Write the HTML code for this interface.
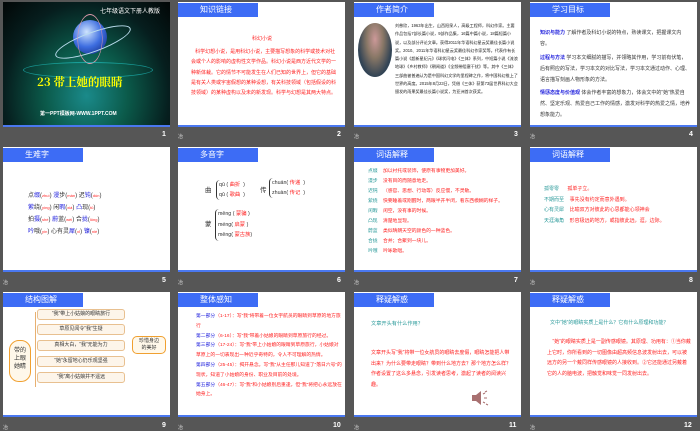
<!DOCTYPE html>
<html><head><meta charset="utf-8"><style>
*{margin:0;padding:0;box-sizing:border-box}
body{width:700px;height:431px;background:#565656;position:relative;overflow:hidden;font-family:"Liberation Sans","Noto Sans CJK SC",sans-serif}
.s{position:absolute;width:167px;height:125px;background:#fff;overflow:hidden}
.s:after{content:"";position:absolute;left:0;right:0;bottom:0;height:2px;background:#4a78f0}
.h{position:absolute;left:0;top:1px;width:80px;height:14px;background:#3d6cf5;color:#fff;font-size:8px;line-height:14px;padding-left:22px}
.n{position:absolute;color:#fff;font-size:7px;font-weight:bold}
.i{position:absolute;color:#ddd;font-size:5px}
.t{position:absolute;font-size:5px;line-height:9.5px}
.r{color:#f22}.b{color:#22d}.g{color:#2a9a9a}
</style></head><body>

<!-- slide 1 -->
<div class="s" style="left:3px;top:2px;background:radial-gradient(ellipse at 50% 75%,#1a8a8a 0%,#0b5a4a 35%,#061e1e 70%,#020606 100%)">
<div style="position:absolute;left:70px;top:18px;width:34px;height:34px;border-radius:50%;background:radial-gradient(circle at 40% 35%,#cfe4ff,#3d6de0 50%,#0a1e70)"></div>
<div style="position:absolute;left:50px;top:30px;width:80px;height:20px;border:1px solid #bde;border-radius:50%;transform:rotate(-20deg)"></div>
<div style="position:absolute;left:62px;top:12px;width:50px;height:50px;border:1px solid #d9a;border-radius:50%;transform:scaleX(.5) rotate(30deg)"></div>
<div style="position:absolute;left:20px;top:60px;width:130px;height:16px;border:1px solid #2cc;border-radius:50%;opacity:.6"></div>
<div style="position:absolute;left:97px;top:4px;color:#fff;font-size:6px">七年级语文下册人教版</div>
<div style="position:absolute;left:34px;top:72px;color:#ff0;font-size:11.5px;font-weight:bold;font-family:'Noto Serif CJK SC',serif">23 带上她的眼睛</div>
<div style="position:absolute;left:37px;top:108px;color:#fff;font-size:5px;font-weight:bold">第一PPT模板网-WWW.1PPT.COM</div>
</div>
<div class="n" style="left:162px;top:131px">1</div>

<!-- slide 2 -->
<div class="s" style="left:178px;top:2px"><div class="h">知识链接</div>
<div class="t r" style="left:74px;top:33px">科幻小说</div>
<div class="t r" style="left:13px;top:45px;width:147px;line-height:10.3px">&nbsp;&nbsp;&nbsp;科学幻想小说，是用科幻小说，主要描写想象的科学或技术对社会或个人的影响的虚构性文学作品。科幻小说是西方近代文学的一种新体裁。它的情节不可能发生在人们已知的世界上，但它的基础是有关人类或宇宙假想的某种设想，有关科技领域（包括假设的科技领域）的某种虚构以及未的新发现。科学与幻想是其两大特点。</div>
</div>
<div class="i" style="left:178px;top:133px">冶</div><div class="n" style="left:337px;top:131px">2</div>

<!-- slide 3 -->
<div class="s" style="left:354px;top:2px"><div class="h">作者简介</div>
<div style="position:absolute;left:4px;top:21px;width:34px;height:54px;border-radius:50%;background:radial-gradient(ellipse at 50% 30%,#c99 0%,#876 35%,#345 70%,#2a4a5a)"></div>
<div class="t" style="left:41px;top:20px;width:123px;font-size:4.1px;line-height:8.3px;color:#222">刘慈欣，1963年出生，山西阳泉人，高级工程师，科幻作家。主要作品包括7部长篇小说，9部作品集，16篇中篇小说，18篇短篇小说，以及部分评论文章。获得2011年华语科幻星云奖最佳长篇小说奖。2010、2011年华语科幻星云奖最佳科幻作家奖等。代表作有长篇小说《超新星纪元》《球状闪电》《三体》系列，中短篇小说《流浪地球》《乡村教师》《朝闻道》《全频带阻塞干扰》等。其中《三体》三部曲被普遍认为是中国科幻文学的里程碑之作，将中国科幻推上了世界的高度。2015年8月23日，凭借《三体》获第73届世界科幻大会颁发的雨果奖最佳长篇小说奖，为亚洲首次获奖。</div>
</div>
<div class="i" style="left:354px;top:133px">冶</div><div class="n" style="left:514px;top:131px">3</div>

<!-- slide 4 -->
<div class="s" style="left:530px;top:2px"><div class="h">学习目标</div>
<div class="t" style="left:10px;top:26px;width:150px;font-size:5px;line-height:11px;color:#333"><b class="b">知识与能力</b> 了解作者及科幻小说的特点，熟读课文，把握课文内容。</div>
<div class="t" style="left:10px;top:51px;width:150px;font-size:5px;line-height:11px;color:#333"><b class="b">过程与方法</b> 学习本文细腻的描写，并领略其作用，学习前有伏笔，后有照应的写法，学习本文的对比写法，学习本文通过动作、心理、语言描写刻画人物形象的方法。</div>
<div class="t" style="left:10px;top:86px;width:150px;font-size:5px;line-height:11px;color:#333"><b class="b">情感态度与价值观</b> 体会作者丰富的想象力，体会文中的“她”热爱自然、坚定乐观、热爱自己工作的情感，激发对科学的热爱之情，培养想象能力。</div>
</div>
<div class="i" style="left:530px;top:133px">冶</div><div class="n" style="left:689px;top:131px">4</div>

<!-- slide 5 -->
<div class="s" style="left:3px;top:147px"><div class="h">生难字</div>
<div class="t" style="left:25px;top:43px;font-size:6px;line-height:12px;color:#333;white-space:nowrap">
点<span class="b">缀</span>(<span class="r" style="font-size:4px">zhuì</span>) <span class="b">漫</span>步(<span class="r" style="font-size:4px">màn</span>) 迟<span class="b">钝</span>(<span class="r" style="font-size:4px">dùn</span>)<br>
<span class="b">萦</span>绕(<span class="r" style="font-size:4px">yíng</span>) 闲<span class="b">暇</span>(<span class="r" style="font-size:4px">xiá</span>) <span class="b">凸</span>现(<span class="r" style="font-size:4px">tū</span>)<br>
拍<span class="b">摄</span>(<span class="r" style="font-size:4px">shè</span>) <span class="b">蔚</span>蓝(<span class="r" style="font-size:4px">wèi</span>) 合<span class="b">拢</span>(<span class="r" style="font-size:4px">lǒng</span>)<br>
<span class="b">吟</span>哦(<span class="r" style="font-size:4px">yín</span>) 心有灵<span class="b">犀</span>(<span class="r" style="font-size:4px">xī</span>) <span class="b">镍</span>(<span class="r" style="font-size:4px">niè</span>)</div>
</div>
<div class="i" style="left:3px;top:279px">冶</div><div class="n" style="left:162px;top:277px">5</div>

<!-- slide 6 -->
<div class="s" style="left:178px;top:147px"><div class="h">多音字</div>
<div class="t" style="left:27px;top:39px;font-size:6.5px;color:#333">曲</div>
<div class="t" style="left:38px;top:33px;font-size:5.3px;line-height:10px;color:#333;border-left:1px solid #333;border-radius:4px 0 0 4px;padding-left:2px">qū ( <span class="r">曲折</span> &nbsp;)<br>qǔ ( <span class="r">歌曲</span> &nbsp;)</div>
<div class="t" style="left:82px;top:39px;font-size:6.5px;color:#333">传</div>
<div class="t" style="left:91px;top:31px;font-size:5.3px;line-height:10px;color:#333;border-left:1px solid #333;border-radius:4px 0 0 4px;padding-left:2px">chuán( <span class="r">传递</span> &nbsp;)<br>zhuàn( <span class="r">传记</span> &nbsp;)</div>
<div class="t" style="left:27px;top:73px;font-size:6.5px;color:#333">蒙</div>
<div class="t" style="left:37px;top:62px;font-size:5.3px;line-height:10.5px;color:#333;border-left:1px solid #333;border-radius:4px 0 0 4px;padding-left:2px">mēng ( <span class="r">蒙骗</span> )<br>méng( <span class="r">启蒙</span> )<br>měng( <span class="r">蒙古族</span>)</div>
</div>
<div class="i" style="left:178px;top:279px">冶</div><div class="n" style="left:337px;top:277px">6</div>

<!-- slide 7 -->
<div class="s" style="left:354px;top:147px"><div class="h">词语解释</div>
<div class="t" style="left:14px;top:20px;font-size:4.8px;line-height:10px;width:150px">
<span class="g">点缀</span>&nbsp;&nbsp;&nbsp; <span class="r">加以衬托或装饰，使原有事物更加美好。</span><br>
<span class="g">漫步</span>&nbsp;&nbsp;&nbsp; <span class="r">没有目的而随意地走。</span><br>
<span class="g">迟钝</span>&nbsp;&nbsp;&nbsp; <span class="r">（感官、思想、行动等）反应慢，不灵敏。</span><br>
<span class="g">萦绕</span>&nbsp;&nbsp;&nbsp; <span class="r">快要睡着或刚醒时，两眼半开半闭，看东西模糊的样子。</span><br>
<span class="g">闲暇</span>&nbsp;&nbsp;&nbsp; <span class="r">闲空，没有事的时候。</span><br>
<span class="g">凸现</span>&nbsp;&nbsp;&nbsp; <span class="r">清楚地显现。</span><br>
<span class="g">蔚蓝</span>&nbsp;&nbsp;&nbsp; <span class="r">类似晴朗天空的颜色的一种蓝色。</span><br>
<span class="g">合拢</span>&nbsp;&nbsp;&nbsp; <span class="r">合并；合聚到一块儿。</span><br>
<span class="g">吟哦</span>&nbsp;&nbsp;&nbsp; <span class="r">吟咏歌唱。</span></div>
</div>
<div class="i" style="left:354px;top:279px">冶</div><div class="n" style="left:514px;top:277px">7</div>

<!-- slide 8 -->
<div class="s" style="left:530px;top:147px"><div class="h">词语解释</div>
<div class="t" style="left:14px;top:37px;font-size:5px;line-height:10.5px;width:152px">
<span class="g">孤零零</span>&nbsp;&nbsp;&nbsp;&nbsp;&nbsp; <span class="r">孤单孑立。</span><br>
<span class="g">不期而至</span>&nbsp;&nbsp;&nbsp; <span class="r">事先没有约定而意外遇到。</span><br>
<span class="g">心有灵犀</span>&nbsp;&nbsp;&nbsp; <span class="r">比喻双方对彼此的心思都能心领神会</span><br>
<span class="g">天涯海角</span>&nbsp;&nbsp;&nbsp; <span class="r">形容极远的地方，或指彼此远，涯，边际。</span></div>
</div>
<div class="i" style="left:530px;top:279px">冶</div><div class="n" style="left:689px;top:277px">8</div>

<!-- slide 9 -->
<div class="s" style="left:3px;top:292px"><div class="h">结构图解</div>
<div style="position:absolute;left:6px;top:48px;width:22px;height:42px;border:1.5px solid #f0a030;border-radius:10px;background:#fff8ea;font-size:6px;line-height:8px;text-align:center;padding-top:6px;color:#333">带的<br>上眼<br>她睛</div>
<div style="position:absolute;left:32px;top:20px;width:2px;height:75px;border-left:1px solid #e8b070"></div>
<div class="t" style="left:34px;top:17px;width:88px;height:11px;border:1px solid #e8c090;border-radius:3px;background:#fdf5ea;font-size:5px;line-height:9px;text-align:center;color:#333">“我”带上小姑娘的眼睛旅行</div>
<div class="t" style="left:34px;top:32px;width:88px;height:11px;border:1px solid #e8c090;border-radius:3px;background:#fdf5ea;font-size:5px;line-height:9px;text-align:center;color:#333">草原见闻令“我”生疑</div>
<div class="t" style="left:34px;top:48px;width:88px;height:11px;border:1px solid #e8c090;border-radius:3px;background:#fdf5ea;font-size:5px;line-height:9px;text-align:center;color:#333">真相大白，“我”无能为力</div>
<div class="t" style="left:34px;top:64px;width:88px;height:11px;border:1px solid #e8c090;border-radius:3px;background:#fdf5ea;font-size:5px;line-height:9px;text-align:center;color:#333">“她”永留地心仍乐观坚强</div>
<div class="t" style="left:34px;top:80px;width:88px;height:11px;border:1px solid #e8c090;border-radius:3px;background:#fdf5ea;font-size:5px;line-height:9px;text-align:center;color:#333">“我”离小姑娘并不遥远</div>
<div class="t" style="left:129px;top:44px;width:34px;height:18px;border:1.5px solid #f0a030;border-radius:5px;background:#fff8ea;font-size:5px;line-height:7px;text-align:center;padding-top:1px;color:#333">珍惜身边<br>的美好</div>
</div>
<div class="i" style="left:3px;top:424px">冶</div><div class="n" style="left:162px;top:422px">9</div>

<!-- slide 10 -->
<div class="s" style="left:178px;top:292px"><div class="h">整体感知</div>
<div class="t r" style="left:18px;top:20px;width:146px;font-size:4.8px;line-height:9.8px">
<span class="b">第一部分</span>（1-17）：写“我”将带着一位女宇航员的眼睛到草原的地方旅行<br>
<span class="b">第二部分</span>（6-16）：写“我”带着小姑娘的眼睛到草原旅行的经过。<br>
<span class="b">第三部分</span>（17-24）：写“我”带上小姑娘的眼睛到草原旅行，小姑娘对草原上的一切表现出一种近乎奇特的，令人不可理解的热情。<br>
<span class="b">第四部分</span>（25-45）：揭开悬念。写“我”从主任那儿知道了“落日六号”的现状，知道了小姑娘的身份、职业及目前的处境。<br>
<span class="b">第五部分</span>（46-47）：写“我”和小姑娘别后重逢，但“我”将把心永远放在她身上。</div>
</div>
<div class="i" style="left:178px;top:424px">冶</div><div class="n" style="left:333px;top:422px">10</div>

<!-- slide 11 -->
<div class="s" style="left:354px;top:292px"><div class="h">释疑解惑</div>
<div class="t g" style="left:17px;top:28px;font-size:5.2px">文章开头有什么作用？</div>
<div class="t r" style="left:17px;top:56px;width:142px;font-size:5px;line-height:10.5px">文章开头写“我”将带一位女航员的眼睛去度假，眼睛怎能把人带出来？为什么要带走眼睛？带到什么地方去？那个地方怎么样？作者设置了这么多悬念，引发读者思考，激起了读者的阅读兴趣。</div>
<svg style="position:absolute;left:117px;top:97px" width="20" height="18" viewBox="0 0 20 18"><path d="M1 6h4l5-4v14l-5-4H1z" fill="#a87070"/><path d="M12 5l2-1M13 9h3M12 13l2 1M14 3l2-1M15 15l2 1" stroke="#a87070" stroke-width="1"/></svg>
</div>
<div class="i" style="left:354px;top:424px">冶</div><div class="n" style="left:509px;top:422px">11</div>

<!-- slide 12 -->
<div class="s" style="left:530px;top:292px"><div class="h">释疑解惑</div>
<div class="t g" style="left:20px;top:27px;font-size:5px">文中“她”的眼睛实质上是什么？它有什么原理和功能？</div>
<div class="t r" style="left:17px;top:45px;width:144px;font-size:5px;line-height:10.5px">&nbsp;&nbsp;&nbsp;&nbsp;“她”的眼睛实质上是一副传感眼镜。其原理、功用有：①当你戴上它时，你所看到的一切图像由超高频信息波发射出去，可以被远方的另一个戴同样传感眼镜的人接收到。②它还能通过另戴着它的人的脑电波，把触觉和味觉一同发射出去。</div>
</div>
<div class="i" style="left:530px;top:424px">冶</div><div class="n" style="left:684px;top:422px">12</div>

</body></html>
